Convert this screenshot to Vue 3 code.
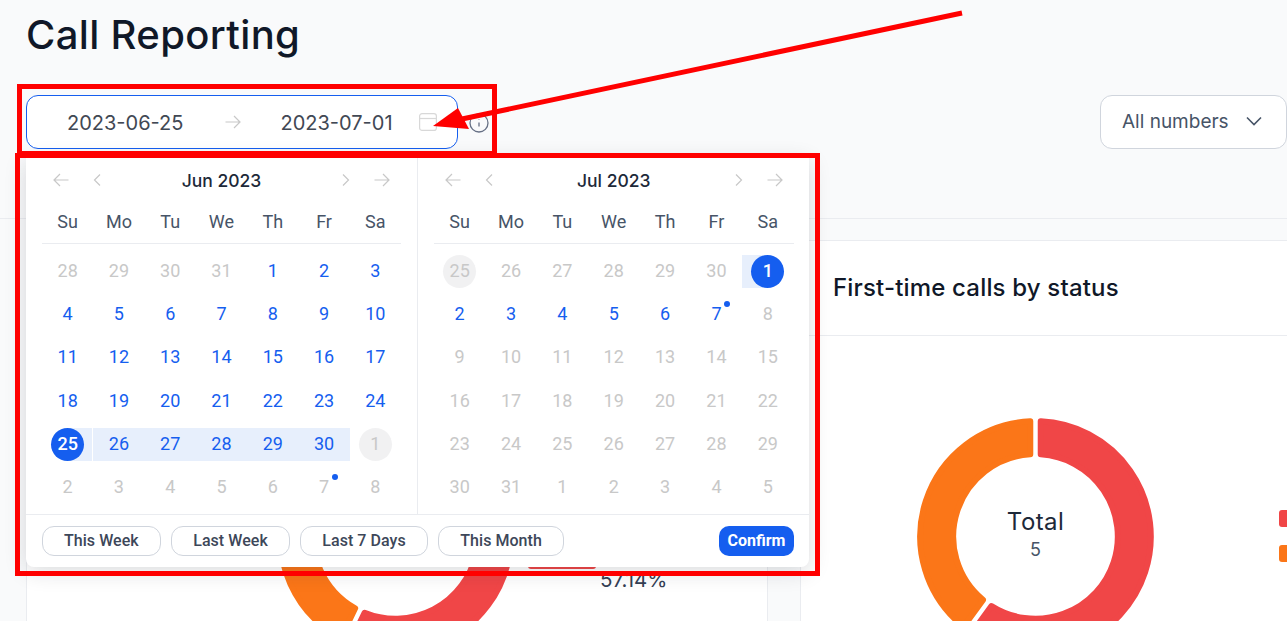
<template>
  <div class="page">
    <h1 class="title">Call Reporting</h1>

    <div class="toolbar">
      <div class="picker">
        <span class="date">2023-06-25</span>
        <svg class="sep" width="16" height="16" viewBox="0 0 16 16" fill="none" stroke="#c8c8c8" stroke-width="1.2">
          <path d="M0.5 8H15M9 2l6 6-6 6" />
        </svg>
        <span class="date second">2023-07-01</span>
        <svg class="cal" width="18" height="18" viewBox="0 0 18 18" fill="none" stroke="#d8d8d8" stroke-width="1.2">
          <rect x="0.6" y="0.6" width="16.8" height="16.8" rx="2.5" />
          <path d="M0.6 5.5H17.4" />
        </svg>
      </div>
      <svg class="info" width="20" height="20" viewBox="0 0 20 20" fill="none" stroke="#667085" stroke-width="1.3">
        <circle cx="10" cy="10" r="9" />
        <path d="M10 9.5v4M10 6.5v.6" />
      </svg>
      <div class="select">
        <span>All numbers</span>
        <svg width="16" height="10" viewBox="0 0 16 10" fill="none" stroke="#475467" stroke-width="1.6">
          <path d="M1 1.5l7 7 7-7" />
        </svg>
      </div>
    </div>

    <div class="tabs-line"></div>

    <div class="cards">
      <section class="card left-card">
        <header class="card-head">Calls by status</header>
        <div class="card-body">
          <svg class="donut" width="237" height="237" viewBox="0 0 237 237">
            <path v-for="seg in leftDonut" :key="seg.color" :d="seg.d" :fill="seg.color" :stroke="seg.color" stroke-width="6" stroke-linejoin="round" />
          </svg>
          <div class="legend-left">
            <div class="bar"></div>
            <div class="pct">57.14%</div>
          </div>
        </div>
      </section>

      <section class="card right-card">
        <header class="card-head">First-time calls by status</header>
        <div class="card-body">
          <div class="donut-wrap">
            <svg class="donut" width="237" height="237" viewBox="0 0 237 237">
              <path v-for="seg in rightDonut" :key="seg.color" :d="seg.d" :fill="seg.color" :stroke="seg.color" stroke-width="6" stroke-linejoin="round" />
            </svg>
            <div class="donut-label">
              <div class="total">Total</div>
              <div class="count">5</div>
            </div>
          </div>
          <div class="legend-right">
            <i class="swatch red"></i>
            <i class="swatch orange"></i>
          </div>
        </div>
      </section>
    </div>

    <div class="popup">
      <div class="panes">
        <div v-for="pane in panes" :key="pane.title" class="pane">
          <div class="pane-head">
            <svg class="nav" width="16" height="14" viewBox="0 0 16 14" fill="none" stroke="#c8c8c8" stroke-width="1.2"><path d="M15.500 7H1M7 1L1 7l6 6" /></svg>
            <svg class="nav" width="16" height="14" viewBox="0 0 16 14" fill="none" stroke="#c8c8c8" stroke-width="1.2"><path d="M11 1.500L5.500 7l5.500 5.500" /></svg>
            <span class="month">{{ pane.title }}</span>
            <svg class="nav" width="16" height="14" viewBox="0 0 16 14" fill="none" stroke="#c8c8c8" stroke-width="1.2"><path d="M5 1.500L10.500 7 5 12.500" /></svg>
            <svg class="nav" width="16" height="14" viewBox="0 0 16 14" fill="none" stroke="#c8c8c8" stroke-width="1.2"><path d="M0.500 7H15M9 1l6 6-6 6" /></svg>
          </div>
          <div class="week">
            <span v-for="d in weekdays" :key="d">{{ d }}</span>
          </div>
          <div class="days">
            <div v-for="(c, i) in pane.cells" :key="i" class="cell" :class="c.kind">
              <span class="num">{{ c.day }}</span>
            </div>
          </div>
        </div>
      </div>
      <div class="popup-foot">
        <button v-for="p in presets" :key="p" class="preset">{{ p }}</button>
        <button class="confirm">Confirm</button>
      </div>
    </div>

    <!-- annotation drawn on top of the screenshot -->
    <svg class="markup" width="1287" height="621" viewBox="0 0 1287 621" fill="none">
      <rect x="19.500" y="86.500" width="475" height="67" stroke="#f00" stroke-width="5" />
      <rect x="17.500" y="155.500" width="800" height="418" stroke="#f00" stroke-width="5" />
      <path d="M962 13L462 119" stroke="#f00" stroke-width="5" />
      <path d="M433 126L458 108L469 129Z" fill="#f00" />
    </svg>
  </div>
</template>

<script setup>
const weekdays = ['Su', 'Mo', 'Tu', 'We', 'Th', 'Fr', 'Sa']
const presets = ['This Week', 'Last Week', 'Last 7 Days', 'This Month']

// 6 rows of days: tail of previous month, the month, head of next month
function buildCells(prevStart, prevLen, monthLen, kindOf) {
  const cells = []
  for (let d = prevStart; d <= prevLen; d++) cells.push({ day: d, kind: kindOf('prev', d) })
  for (let d = 1; d <= monthLen; d++) cells.push({ day: d, kind: kindOf('cur', d) })
  let next = 1
  while (cells.length < 42) {
    cells.push({ day: next, kind: kindOf('next', next) })
    next++
  }
  return cells
}

const panes = [
  {
    title: 'Jun 2023',
    cells: buildCells(28, 31, 30, (part, d) => {
      if (part === 'cur') {
        if (d === 25) return 'active start'
        return d > 25 ? 'active range' : 'active'
      }
      if (part === 'next' && d === 1) return 'ghost'
      if (part === 'next' && d === 7) return 'today'
      return ''
    }),
  },
  {
    title: 'Jul 2023',
    cells: buildCells(25, 30, 31, (part, d) => {
      if (part === 'prev' && d === 25) return 'ghost'
      if (part !== 'cur') return ''
      if (d === 1) return 'active end'
      if (d === 7) return 'active today'
      return d < 7 ? 'active' : ''
    }),
  },
]

function polar(c, r, deg) {
  const a = ((deg - 90) * Math.PI) / 180
  return `${(c + r * Math.cos(a)).toFixed(2)} ${(c + r * Math.sin(a)).toFixed(2)}`
}

// ring slice; radii are pulled in by the stroke so that corners come out round
function slice(from, to, r = 115.3, ri = 82.3) {
  const big = to - from > 180 ? 1 : 0
  const c = 118.5
  const pad = 2.6
  const po = pad, pi = (pad * r) / ri
  return `M${polar(c, r, from + po)}A${r} ${r} 0 ${big} 1 ${polar(c, r, to - po)}L${polar(c, ri, to - pi)}A${ri} ${ri} 0 ${big} 0 ${polar(c, ri, from + pi)}Z`
}

const leftDonut = [
  { color: '#f04647', d: slice(0, 205.7) },
  { color: '#fb7618', d: slice(205.7, 360) },
]
const rightDonut = [
  { color: '#f04647', d: slice(0, 216) },
  { color: '#fb7618', d: slice(216, 360) },
]
</script>

<style>
body {
  background: #f9fafb;
}
</style>

<style scoped>
.page {
  position: relative;
  height: 621px;
  overflow: hidden;
  background: #f9fafb;
  font-family: Inter, sans-serif;
  color: #101828;
}

.title {
  margin: 0;
  padding: 10px 0 0 26px;
  height: 95px;
  box-sizing: border-box;
  font-size: 40px;
  line-height: 50px;
  font-weight: 450;
  letter-spacing: 0.35px;
}

.toolbar {
  display: flex;
  align-items: center;
  padding-left: 26px;
  height: 54px;
}

.picker {
  display: flex;
  align-items: center;
  flex: none;
  width: 432px;
  height: 54px;
  box-sizing: border-box;
  padding-left: 40px;
  background: #fff;
  border: 1px solid #155eef;
  border-radius: 12px;
}

.date {
  padding-top: 2px;
  font-size: 20px;
  color: #414854;
  white-space: nowrap;
}

.sep {
  margin-left: 42px;
}

.second {
  margin-left: 39px;
}

.cal {
  margin-left: 26px;
}

.info {
  margin: 2px 0 0 11px;
}

.select {
  display: flex;
  align-items: center;
  gap: 17px;
  margin-left: auto;
  width: 187px;
  height: 54px;
  box-sizing: border-box;
  padding: 0 0 2px 21px;
  background: #fff;
  border: 1px solid #d0d5dd;
  border-radius: 12px;
  font-size: 19px;
  color: #475467;
}

.tabs-line {
  height: 1px;
  margin: 69px 0 21px;
  background: #eaecf0;
}

.cards {
  display: flex;
  gap: 32px;
  padding-left: 26px;
}

.card {
  height: 400px;
  box-sizing: border-box;
  background: #fff;
  border: 1px solid #eaecf0;
}

.left-card {
  flex: none;
  width: 742px;
}

.right-card {
  flex: 1;
  min-width: 0;
  border-right: 0;
}

.card-head {
  height: 95px;
  box-sizing: border-box;
  padding: 0 32px 2px;
  display: flex;
  align-items: center;
  border-bottom: 1px solid #eaecf0;
  font-size: 24px;
  font-weight: 450;
  letter-spacing: 0.17px;
  color: #101828;
}

.card-body {
  display: flex;
  padding-top: 82px;
}

.left-card .card-body {
  padding-left: 250px;
}

.right-card .card-body {
  padding-left: 116px;
}

.donut {
  display: block;
  flex: none;
}

.donut-wrap {
  position: relative;
  flex: none;
}

.donut-label {
  position: absolute;
  inset: 0;
  display: flex;
  flex-direction: column;
  align-items: center;
  justify-content: center;
  padding-bottom: 4px;
}

.total {
  font-size: 24px;
  line-height: 30px;
  letter-spacing: 0.4px;
  color: #1d2939;
}

.count {
  font-size: 18px;
  line-height: 26px;
  color: #475467;
}

.legend-left {
  flex: none;
  margin: 137px 0 0 14px;
  width: 160px;
}

.bar {
  width: 68px;
  height: 14px;
  border-radius: 3px;
  background: #f04647;
}

.pct {
  margin: -1px 0 0 72px;
  font-size: 20.500px;
  line-height: 24px;
  color: #344054;
}

.legend-right {
  display: flex;
  flex-direction: column;
  gap: 18px;
  margin: 92px 0 0 125px;
}

.swatch {
  display: block;
  width: 17px;
  height: 17px;
  border-radius: 3px;
}

.red {
  background: #f04647;
}

.orange {
  background: #fb7618;
}

.popup {
  position: absolute;
  left: 26px;
  top: 158px;
  width: 783px;
  height: 409px;
  display: flex;
  flex-direction: column;
  background: #fff;
  border-radius: 0 0 8px 8px;
  box-shadow: 0 4px 22px rgba(16, 24, 40, 0.16);
  font-family: Roboto, sans-serif;
}

.panes {
  display: flex;
  height: 356px;
  border-bottom: 1px solid #eaecf0;
}

.pane {
  width: 392px;
  box-sizing: border-box;
  padding: 0 16px;
}

.pane:first-child {
  border-right: 1px solid #eaecf0;
}

.pane:last-child {
  width: 391px;
  padding-right: 15.500px;
}

.pane-head {
  display: flex;
  align-items: center;
  gap: 20px;
  height: 44px;
  padding: 0 11px;
}

.month {
  flex: 1;
  text-align: center;
  font-family: Inter, sans-serif;
  font-size: 17.500px;
  font-weight: 500;
  color: #1d2939;
}

.nav {
  flex: none;
}

.week {
  display: grid;
  grid-template-columns: repeat(7, 1fr);
  height: 42px;
  box-sizing: border-box;
  padding-bottom: 3px;
  align-items: center;
  text-align: center;
  border-bottom: 1px solid #eaecf0;
  font-size: 18px;
  color: #475467;
}

.days {
  display: grid;
  grid-template-columns: repeat(7, 1fr);
  grid-auto-rows: 43.300px;
  padding-top: 5.500px;
}

.cell {
  position: relative;
  display: flex;
  align-items: center;
  justify-content: center;
  font-size: 18px;
  color: #c8c8c8;
}

.num {
  position: relative;
  display: flex;
  align-items: center;
  justify-content: center;
  width: 33px;
  height: 33px;
  box-sizing: border-box;
  padding-bottom: 2px;
  border-radius: 50%;
}

.active {
  color: #155eef;
}

.range::before,
.start::before,
.end::before {
  content: '';
  position: absolute;
  top: 5px;
  height: 33px;
  left: 0;
  right: 0;
  background: #e7effc;
}

.start::before {
  left: 50%;
  right: 1px;
}

.end::before {
  right: 50%;
}

.start .num,
.end .num {
  background: #155eef;
  color: #fff;
  font-weight: 500;
}

.ghost .num {
  background: #f1f1f2;
}

.today::after {
  content: '';
  position: absolute;
  left: calc(50% + 8px);
  top: 8px;
  width: 6px;
  height: 6px;
  border-radius: 50%;
  background: #155eef;
}

.popup-foot {
  flex: 1;
  display: flex;
  align-items: center;
  gap: 10.500px;
  padding: 0 15px 0 16px;
}

.preset {
  height: 30px;
  padding: 0 21px 2px;
  background: #fff;
  border: 1px solid #d0d5dd;
  border-radius: 12px;
  font-family: Roboto, sans-serif;
  font-size: 16px;
  font-weight: 500;
  letter-spacing: 0.05px;
  color: #3d4759;
}

.confirm {
  margin-left: auto;
  width: 75px;
  height: 30px;
  padding: 0 0 2px;
  background: #155eef;
  border: 0;
  border-radius: 10px;
  font-family: Roboto, sans-serif;
  font-size: 16px;
  font-weight: 700;
  color: #fff;
}

.markup {
  position: absolute;
  left: 0;
  top: 0;
  pointer-events: none;
}
</style>
